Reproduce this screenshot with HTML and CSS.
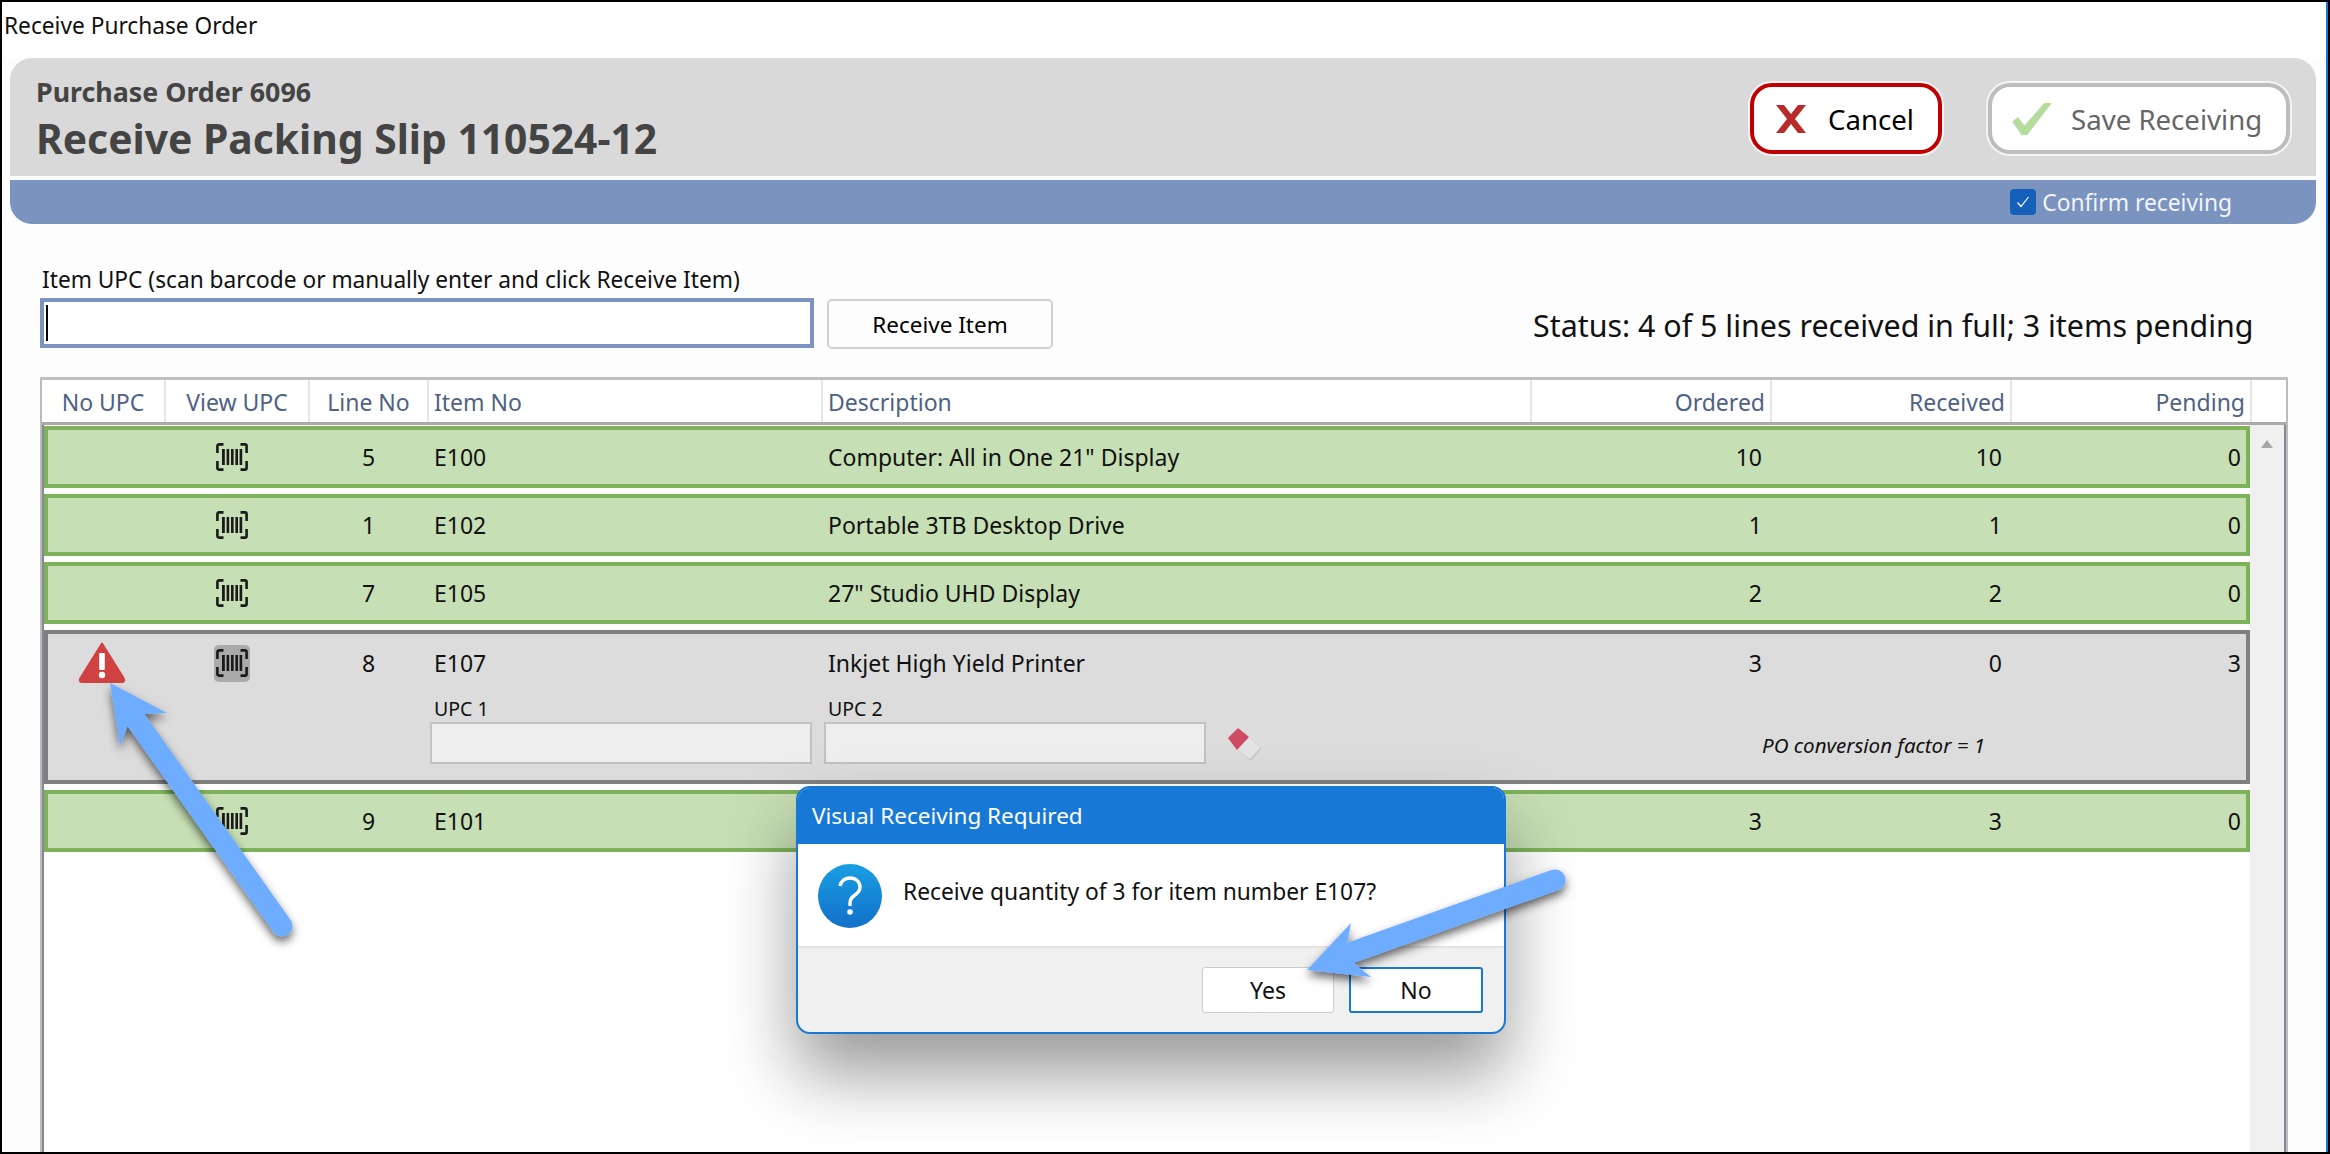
FILE: index.html
```html
<!DOCTYPE html>
<html lang="en">
<head>
<meta charset="utf-8">
<title>Receive Purchase Order</title>
<link rel="stylesheet" href="styles.css">
</head>
<body>
<svg class="defs" width="0" height="0">
  <symbol id="barcode" viewBox="0 0 32 28">
    <path d="M7.5 1.4H3Q1.4 1.4 1.4 3V10M24.5 1.4H29Q30.6 1.4 30.6 3V10M7.5 26.6H3Q1.4 26.6 1.4 25V18M24.5 26.6H29Q30.6 26.6 30.6 25V18" fill="none" stroke="#1a1a1a" stroke-width="2.6"/>
    <path d="M6 6h2.8v16H6zM10.6 6h2.6v16h-2.6zM15 6h2.6v16H15zM19.4 6H22v16h-2.6zM23.6 6h2.6v16h-2.6z" fill="#1a1a1a"/>
  </symbol>
</svg>
<div class="window">
  <div class="titlebar">Receive Purchase Order</div>
  <header class="head">
    <div class="head-titles">
      <div class="po">Purchase Order 6096</div>
      <h1 class="slip">Receive Packing Slip 110524-12</h1>
    </div>
    <div class="head-actions">
      <button class="action action-cancel">
        <svg class="action-icon" width="32" height="32" viewBox="0 0 32 32"><path d="M1 2h8l7 9 7-9h8L20 16l11 14h-8l-7-9-7 9H1l11-14z" fill="#b92b2b"/></svg>
        <span>Cancel</span>
      </button>
      <button class="action action-save">
        <svg class="action-icon" width="42" height="32" viewBox="0 0 42 34"><path d="M0 20L6 15 13 24 34 0H42L16 34H10Z" fill="#b4dc9c"/></svg>
        <span>Save Receiving</span>
      </button>
    </div>
  </header>
  <div class="bar">
    <span class="check"><svg width="14" height="14" viewBox="0 0 14 14"><path d="M1.5 7.5l3.5 4L12.5 2" fill="none" stroke="#fff" stroke-width="1.2"/></svg></span>
    <span class="check-label">Confirm receiving</span>
  </div>
  <section class="entry">
    <div class="entry-field">
      <label class="entry-label">Item UPC (scan barcode or manually enter and click Receive Item)</label>
      <div class="entry-input"><i class="caret"></i></div>
    </div>
    <button class="receive">Receive Item</button>
    <div class="status">Status: 4 of 5 lines received in full; 3 items pending</div>
  </section>
  <section class="table">
    <div class="thead">
      <div class="th c">No UPC</div>
      <div class="th c">View UPC</div>
      <div class="th c">Line No</div>
      <div class="th">Item No</div>
      <div class="th">Description</div>
      <div class="th r">Ordered</div>
      <div class="th r">Received</div>
      <div class="th r last">Pending</div>
      <div class="th end"></div>
    </div>
    <div class="tbody">
      <div class="rows">
        <div class="row done">
          <div></div><div class="cell-icon"><svg class="bc"><use href="#barcode"/></svg></div><div class="c">5</div><div class="t">E100</div><div class="t">Computer: All in One 21" Display</div><div class="n">10</div><div class="n">10</div><div class="n p">0</div>
        </div>
        <div class="row done">
          <div></div><div class="cell-icon"><svg class="bc"><use href="#barcode"/></svg></div><div class="c">1</div><div class="t">E102</div><div class="t">Portable 3TB Desktop Drive</div><div class="n">1</div><div class="n">1</div><div class="n p">0</div>
        </div>
        <div class="row done">
          <div></div><div class="cell-icon"><svg class="bc"><use href="#barcode"/></svg></div><div class="c">7</div><div class="t">E105</div><div class="t">27" Studio UHD Display</div><div class="n">2</div><div class="n">2</div><div class="n p">0</div>
        </div>
        <div class="row open">
          <div class="cell-warn">
            <svg width="48" height="42" viewBox="0 0 48 42"><path d="M24 2.5L45.5 37Q47.5 41 43.5 41H4.5Q.5 41 2.5 37Z" fill="#d04242" stroke="#d04242" stroke-linejoin="round" stroke-width="2"/><rect x="21.2" y="12" width="5.6" height="17" rx="1" fill="#fff"/><circle cx="24" cy="34" r="3.2" fill="#fff"/></svg>
          </div>
          <div class="cell-icon"><span class="bc-on"><svg class="bc"><use href="#barcode"/></svg></span></div><div class="c">8</div><div class="t">E107</div><div class="t">Inkjet High Yield Printer</div><div class="n">3</div><div class="n">0</div><div class="n p">3</div>
          <div class="upc upc-1">
            <label class="upc-label">UPC 1</label>
            <div class="upc-input"></div>
          </div>
          <div class="upc upc-2">
            <label class="upc-label">UPC 2</label>
            <div class="upc-line">
              <div class="upc-input"></div>
              <svg class="eraser" width="33" height="34" viewBox="0 0 33 34"><path d="M22 11L33 22 23 34 10 24z" fill="#c8c8c8"/><path d="M21 10L32 21 22 32 9 23z" fill="#e4e4e4"/><path d="M0 11L10 1 21 10 9 23z" fill="#cf4a63"/></svg>
            </div>
          </div>
          <div class="factor">PO conversion factor = 1</div>
        </div>
        <div class="row done">
          <div></div><div class="cell-icon"><svg class="bc"><use href="#barcode"/></svg></div><div class="c">9</div><div class="t">E101</div><div class="t"></div><div class="n">3</div><div class="n">3</div><div class="n p">0</div>
        </div>
      </div>
      <div class="scroll"><i class="scroll-up"></i></div>
    </div>
  </section>

  <div class="dialog">
    <div class="dialog-title">Visual Receiving Required</div>
    <div class="dialog-body">
      <svg class="dialog-icon" width="64" height="64" viewBox="0 0 64 64">
        <defs><linearGradient id="q" x1="0" y1="0" x2="0" y2="1"><stop offset="0" stop-color="#1a9ee2"/><stop offset="1" stop-color="#1270c8"/></linearGradient></defs>
        <circle cx="32" cy="32" r="32" fill="url(#q)"/>
        <path d="M22 22c1-5 5-8 10-8 6 0 10 4 10 9 0 4-2 6-5 8-3 2-5 4-5 8v3" fill="none" stroke="#fff" stroke-width="3.4"/>
        <circle cx="32" cy="48" r="2.8" fill="#fff"/>
      </svg>
      <div class="dialog-text">Receive quantity of 3 for item number E107?</div>
    </div>
    <div class="dialog-foot">
      <button class="dlg-btn dlg-yes">Yes</button>
      <button class="dlg-btn dlg-default">No</button>
    </div>
  </div>

  <svg class="arrows" width="2330" height="1154" viewBox="0 0 2330 1154">
    <defs><filter id="sh" x="-30%" y="-30%" width="160%" height="160%"><feDropShadow dx="0" dy="5" stdDeviation="5" flood-color="#000" flood-opacity=".6"/></filter></defs>
    <g filter="url(#sh)" fill="#6eacff" stroke="#6eacff">
      <path d="M282 926L136 720" stroke-width="21" stroke-linecap="round" fill="none"/>
      <path d="M110 683L167 713 145 714 128 725 120 746Z" stroke="none"/>
    </g>
    <g filter="url(#sh)" fill="#6eacff" stroke="#6eacff">
      <path d="M1555 880L1350 953" stroke-width="21" stroke-linecap="round" fill="none"/>
      <path d="M1307 970L1351 923 1347 944 1354 963 1371 977Z" stroke="none"/>
    </g>
  </svg>
</div>
</body>
</html>
```
FILE: styles.css
```css
* { box-sizing: border-box; }
html, body { margin: 0; padding: 0; }
body { width: 2330px; height: 1154px; overflow: hidden; font-family: "Noto Sans", "Open Sans", sans-serif; color: #111; }
.defs { position: absolute; }
button { font-family: inherit; cursor: default; }

.window { position: relative; width: 2330px; height: 1154px; background: #fdfdfd; border: solid #000; border-width: 2px 0 2px 2px; display: flex; flex-direction: column; overflow: hidden; }
.window::after { content: ""; position: absolute; top: 0; bottom: 0; right: 0; width: 4px; background: linear-gradient(to right, #1675d1 50%, #000 50%); }

.titlebar { height: 56px; padding: 10px 0 0 2px; font-size: 22.7px; line-height: 28px; background: #fff; }

.head { height: 118px; margin: 0 14px 0 8px; background: #d9d9d9; border-radius: 22px 22px 0 0; display: flex; justify-content: space-between; align-items: flex-start; }
.head-titles { padding: 19px 0 0 26px; color: #444; }
.po { font-size: 26.8px; line-height: 30px; font-weight: 700; }
.slip { margin: 7px 0 0; font-size: 40.8px; line-height: 48px; font-weight: 700; }
.head-actions { display: flex; gap: 46px; padding: 25px 26px 0 0; }
.action { height: 71px; display: flex; align-items: center; background: #fff; border-radius: 22px; font-size: 27.6px; box-shadow: 0 0 0 2px #f4f4f4; padding: 0; }
.action-cancel { width: 192px; border: 4px solid #c00000; color: #000; padding-left: 21px; gap: 21px; }
.action-save { width: 302px; border: 4px solid #bdbdbd; color: #666; padding-left: 19px; gap: 18px; }

.bar { height: 44px; margin: 4px 14px 0 8px; background: #7b93bf; border-radius: 0 0 22px 22px; display: flex; align-items: center; justify-content: flex-end; gap: 6px; padding-right: 84px; color: #fff; }
.check { width: 26px; height: 26px; background: #1560b8; border-radius: 4px; display: flex; align-items: center; justify-content: center; }
.check-label { font-size: 22.8px; color: #f2f5fa; }

.entry { height: 153px; display: flex; align-items: flex-start; padding: 0 0 0 38px; position: relative; }
.entry-field { width: 787px; padding-top: 42px; }
.entry-label { display: block; font-size: 22.7px; line-height: 28px; color: #111; height: 31px; padding-left: 2px; }
.entry-input { width: 774px; height: 50px; border: 4px solid #7b93bf; background: #fff; padding: 3px 2px; margin-top: 1px; }
.caret { display: block; width: 2px; height: 36px; background: #000; }
.receive { width: 226px; height: 50px; margin: 75px 0 0 0; background: #fdfdfd; border: 2px solid #d0d0d0; border-radius: 5px; font-size: 22.5px; color: #000; }
.status { margin: 82px 0 0 auto; width: 797px; font-size: 30.4px; line-height: 40px; color: #111; }

.table { flex: 1; margin: 0 40px 0 38px; display: flex; flex-direction: column; min-height: 0; background: #fff; border-left: 2px solid #bbb; border-right: 2px solid #bbb; border-top: 3px solid #bfbfbf; width: 2248px; }
.thead { height: 45px; display: grid; grid-template-columns: 124px 144px 119px 394px 709px 240px 240px 240px 1fr; border-bottom: 3px solid #a9a9a9; flex: none; }
.th { font-size: 23px; line-height: 44px; height: 42px; color: #4f6283; border-right: 2px solid #e6e6e6; padding: 0 5px 0 5px; }
.th.c { text-align: center; }
.th.r { text-align: right; padding-right: 5px; }
.th.end { border-right: 0; }

.tbody { flex: 1; display: flex; min-height: 0; border-left: 2px solid #888893; border-right: 2px solid #888893; background: #fff; }
.rows { width: 2206px; display: flex; flex-direction: column; gap: 6px; padding-top: 1px; }
.row { display: grid; grid-template-columns: 117px 144px 119px 394px 709px 240px 240px 235px; height: 62px; border: 4px solid #7eb25a; background: #c7dfb4; align-items: center; font-size: 23px; color: #111; }
.row .c { text-align: center; }
.row .t { padding-left: 6px; }
.row .n { text-align: right; padding-right: 9px; }
.row .n.p { padding-right: 5px; }
.cell-icon { display: flex; justify-content: center; align-items: center; padding-right: 10px; }
.bc { width: 32px; height: 28px; display: block; }
.bc-on { width: 36px; height: 37px; background: #aaa; border-radius: 5px; display: flex; align-items: center; justify-content: center; }

.row.open { height: 154px; border-color: #808080; background: #dcdcdc; grid-template-rows: 58px 1fr; align-items: start; }
.row.open > div:nth-child(-n+8) { align-self: center; }
.cell-warn { display: flex; justify-content: center; padding-right: 9px; margin-top: -2px; }
.upc { grid-row: 2; padding-left: 2px; }
.upc-1 { grid-column: 4; }
.upc-2 { grid-column: 5; }
.upc-label { display: block; font-size: 19.5px; line-height: 26px; padding-left: 4px; margin-top: 4px; height: 26px; }
.upc-input { width: 382px; height: 42px; background: #eee; border: 2px solid #c2c2c2; }
.upc-line { display: flex; gap: 22px; align-items: flex-start; }
.eraser { margin-top: 5px; }
.factor { grid-row: 2; grid-column: 6 / span 2; text-align: right; padding-right: 26px; font-size: 20.5px; font-style: italic; margin-top: 39px; line-height: 28px; }

.scroll { width: 34px; background: #f0f0f0; position: relative; }
.scroll-up { position: absolute; left: 11px; top: 15px; width: 0; height: 0; border: solid transparent; border-width: 0 6px 8px; border-bottom-color: #a6a6a6; }

.dialog { position: absolute; left: 794px; top: 784px; width: 710px; height: 248px; background: #f0f0f0; border: 2px solid #1778d6; border-radius: 14px; box-shadow: 0 40px 70px rgba(0,0,0,.4); display: flex; flex-direction: column; overflow: hidden; }
.dialog-title { height: 56px; background: #1778d6; color: #fff; font-size: 22.5px; line-height: 56px; padding-left: 14px; flex: none; }
.dialog-body { height: 104px; background: #fff; border-bottom: 2px solid #e4e4e4; display: flex; align-items: flex-start; padding: 20px 0 0 20px; gap: 21px; flex: none; }
.dialog-text { font-size: 22.8px; line-height: 30px; padding-top: 13px; color: #111; }
.dialog-foot { flex: 1; display: flex; justify-content: flex-end; gap: 15px; padding: 19px 21px 0 0; align-items: flex-start; }
.dlg-btn { width: 134px; height: 46px; background: #fff; border: 1px solid #ccc; border-radius: 3px; font-size: 23px; color: #111; }
.dlg-yes { width: 132px; }
.dlg-default { border: 2px solid #1778d6; }

.arrows { position: absolute; left: -2px; top: -2px; pointer-events: none; }
```
